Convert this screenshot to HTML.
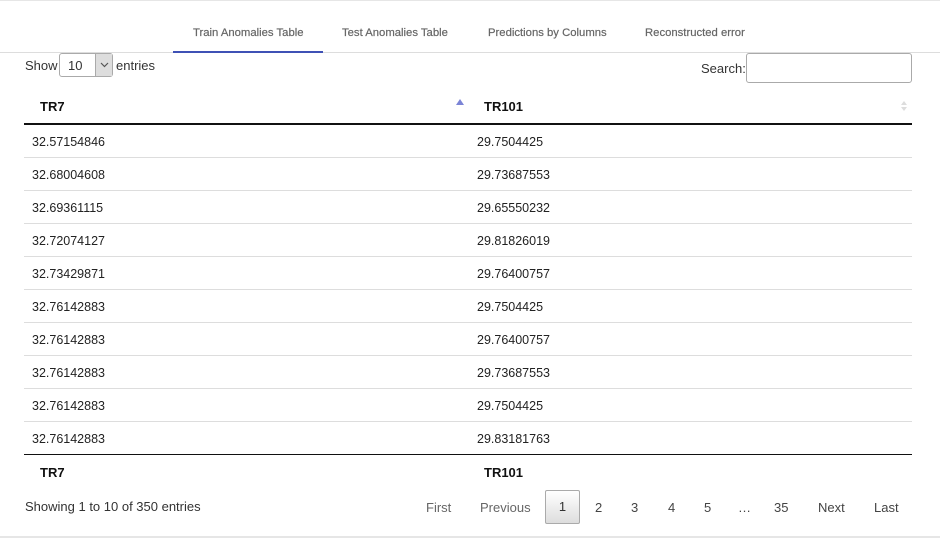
<!DOCTYPE html>
<html><head><style>
*{margin:0;padding:0;box-sizing:border-box}
body{width:940px;height:538px;background:#fff;font-family:"Liberation Sans",Arial,sans-serif;color:#333;position:relative;overflow:hidden}
.a{position:absolute;white-space:nowrap}
.tab{position:absolute;top:27px;font-size:11.3px;color:#666;font-weight:500;-webkit-text-stroke:0.2px #666}
.row{position:absolute;left:24px;width:888px;height:33px;border-bottom:1px solid #ddd;font-size:12.5px;color:#222}
.row span{position:absolute;top:10px}
.pg{position:absolute;top:500px;font-size:13px;color:#444}
</style></head><body>
<div class="a" style="left:0;top:0;width:940px;height:1px;background:#e6e6e6"></div>
<div class="a" style="left:0;top:52px;width:940px;height:1px;background:#ddd"></div>
<div class="tab" style="left:193px">Train Anomalies Table</div>
<div class="tab" style="left:342px">Test Anomalies Table</div>
<div class="tab" style="left:488px">Predictions by Columns</div>
<div class="tab" style="left:645px">Reconstructed error</div>
<div class="a" style="left:173px;top:51px;width:150px;height:2px;background:#3f51b5"></div>

<div class="a" style="left:25px;top:58px;font-size:13px">Show</div>
<div class="a" style="left:59px;top:53px;width:54px;height:24px;border:1px solid #aaa;border-radius:3px;font-size:13px;padding:4px 0 0 8px">10</div>
<div class="a" style="left:95px;top:54px;width:17px;height:22px;background:#ddd;border-left:1px solid #aaa">
<svg width="17" height="22"><path d="M5 9 L8.5 12.5 L12 9" fill="none" stroke="#555" stroke-width="1.2"/></svg></div>
<div class="a" style="left:116px;top:58px;font-size:13px">entries</div>
<div class="a" style="left:701px;top:61px;font-size:13px">Search:</div>
<div class="a" style="left:746px;top:53px;width:166px;height:30px;border:1px solid #aaa;border-radius:3px"></div>

<div class="a" style="left:40px;top:99px;font-size:13px;font-weight:bold;color:#111">TR7</div>
<div class="a" style="left:484px;top:99px;font-size:13px;font-weight:bold;color:#111">TR101</div>
<svg class="a" style="left:455px;top:98px" width="10" height="8"><path d="M1 7 L5 1 L9 7Z" fill="#7b84d6"/></svg>
<svg class="a" style="left:900px;top:100px" width="8" height="12"><path d="M1 5 L4 1 L7 5Z M1 7 L4 11 L7 7Z" fill="#ddd"/></svg>
<div class="a" style="left:24px;top:123px;width:888px;height:2px;background:#111"></div>

<div class="row" style="top:125px"><span style="left:8px">32.57154846</span><span style="left:453px">29.7504425</span></div>
<div class="row" style="top:158px"><span style="left:8px">32.68004608</span><span style="left:453px">29.73687553</span></div>
<div class="row" style="top:191px"><span style="left:8px">32.69361115</span><span style="left:453px">29.65550232</span></div>
<div class="row" style="top:224px"><span style="left:8px">32.72074127</span><span style="left:453px">29.81826019</span></div>
<div class="row" style="top:257px"><span style="left:8px">32.73429871</span><span style="left:453px">29.76400757</span></div>
<div class="row" style="top:290px"><span style="left:8px">32.76142883</span><span style="left:453px">29.7504425</span></div>
<div class="row" style="top:323px"><span style="left:8px">32.76142883</span><span style="left:453px">29.76400757</span></div>
<div class="row" style="top:356px"><span style="left:8px">32.76142883</span><span style="left:453px">29.73687553</span></div>
<div class="row" style="top:389px"><span style="left:8px">32.76142883</span><span style="left:453px">29.7504425</span></div>
<div class="row" style="top:422px;border-bottom:none"><span style="left:8px">32.76142883</span><span style="left:453px">29.83181763</span></div>
<div class="a" style="left:24px;top:454px;width:888px;height:1px;background:#111"></div>
<div class="a" style="left:40px;top:465px;font-size:13px;font-weight:bold;color:#111">TR7</div>
<div class="a" style="left:484px;top:465px;font-size:13px;font-weight:bold;color:#111">TR101</div>

<div class="a" style="left:25px;top:499px;font-size:13px">Showing 1 to 10 of 350 entries</div>
<div class="pg" style="left:426px;color:#666">First</div>
<div class="pg" style="left:480px;color:#666">Previous</div>
<div class="a" style="left:545px;top:490px;width:35px;height:34px;border:1px solid #aaa;border-radius:2px;background:linear-gradient(#fff,#ddd);font-size:13px;text-align:center;line-height:32px">1</div>
<div class="pg" style="left:595px">2</div>
<div class="pg" style="left:631px">3</div>
<div class="pg" style="left:668px">4</div>
<div class="pg" style="left:704px">5</div>
<div class="pg" style="left:738px">…</div>
<div class="pg" style="left:774px">35</div>
<div class="pg" style="left:818px">Next</div>
<div class="pg" style="left:874px">Last</div>
<div class="a" style="left:0;top:536px;width:940px;height:2px;background:#e6e6e6"></div>
</body></html>
